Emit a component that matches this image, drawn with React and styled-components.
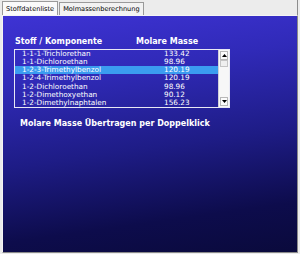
import React from 'react'
import styled, { createGlobalStyle } from 'styled-components'

const GlobalStyle = createGlobalStyle`
  html, body {
    margin: 0;
    padding: 0;
    background: #ececec;
  }
  body {
    font-family: "DejaVu Sans", Verdana, sans-serif;
  }
`

const Window = styled.div`
  width: 300px;
  height: 254px;
  box-sizing: border-box;
  padding: 0 2px 1px 2px;
  display: flex;
  flex-direction: column;
  background: #ececec;
  overflow: hidden;
`

const TabBar = styled.div`
  height: 15px;
  display: flex;
  align-items: flex-end;
  gap: 1px;
  background: #ececec;
  border-right: 1px solid #8c8c8c;
`

const Tab = styled.div`
  height: ${(p) => (p.$active ? '14px' : '13px')};
  box-sizing: border-box;
  padding: 0 3px;
  display: flex;
  align-items: center;
  font-size: 6.6px;
  color: #000;
  background: ${(p) => (p.$active ? '#fafafa' : '#f2f2f2')};
  border: 1px solid #9a9a9a;
  border-bottom: none;
  white-space: nowrap;
`

const Panel = styled.div`
  flex: 1;
  border-left: 1px solid #f4f4f4;
  border-top: 1px solid #f4f4f4;
  border-right: 1px solid #8a8a8a;
  border-bottom: 1px solid #8a8a8a;
  background: linear-gradient(172deg, #3e33d4 0%, #302ab8 25%, #1e1c86 55%, #0d0c4c 82%, #0a0a3c 100%);
  padding: 20px 0 0 11px;
  color: #fff;
`

const Headers = styled.div`
  display: flex;
  font-weight: bold;
  font-size: 8px;
  height: 10px;
  align-items: flex-end;
  padding-left: 1px;
`

const HeadCell = styled.div`
  width: ${(p) => p.$w}px;
`

const ListBox = styled.div`
  margin-top: 3px;
  width: 216px;
  height: 59px;
  box-sizing: border-box;
  border: 1px solid #e8e8f4;
  display: flex;
`

const Items = styled.div`
  flex: 1;
`

const Row = styled.div`
  display: flex;
  height: 8.15px;
  line-height: 8.15px;
  font-size: 7.3px;
  background: ${(p) => (p.$selected ? '#3b9cf0' : 'transparent')};
  white-space: nowrap;
`

const Name = styled.div`
  width: 142px;
  padding-left: 7px;
`

const Mass = styled.div``

const Scrollbar = styled.div`
  width: 11px;
  background: #f7f7f7;
  border-left: 1px solid #d0d0d8;
  display: flex;
  flex-direction: column;
  padding: 1px 0;
  box-sizing: border-box;
`

const ScrollButton = styled.div`
  height: 9px;
  margin: 0 1px;
  background: #fbfbfb;
  border: 1px solid #b8b8b8;
  box-sizing: border-box;
  display: flex;
  align-items: center;
  justify-content: center;
`

const Thumb = styled.div`
  height: 7px;
  margin: 0 1px;
  background: #efefef;
  border: 1px solid #c4c4c4;
  box-sizing: border-box;
`

const Track = styled.div`
  flex: 1;
`

const Hint = styled.div`
  margin-top: 11px;
  padding-left: 6px;
  font-size: 8px;
  font-weight: bold;
`

const Arrow = ({ down }) => (
  <svg width="5" height="3" viewBox="0 0 5 3">
    <polygon points={down ? '0,0 5,0 2.5,3' : '0,3 5,3 2.5,0'} fill="#000" />
  </svg>
)

const stoffe = [
  ['1-1-1-Trichlorethan', '133.42'],
  ['1-1-Dichloroethan', '98.96'],
  ['1-2-3-Trimethylbenzol', '120.19'],
  ['1-2-4-Trimethylbenzol', '120.19'],
  ['1-2-Dichloroethan', '98.96'],
  ['1-2-Dimethoxyethan', '90.12'],
  ['1-2-Dimethylnaphtalen', '156.23'],
]

const App = () => {
  return (
    <>
      <GlobalStyle />
      <Window>
        <TabBar>
          <Tab $active>Stoffdatenliste</Tab>
          <Tab>Molmassenberechnung</Tab>
        </TabBar>
        <Panel>
          <Headers>
            <HeadCell $w={121}>Stoff / Komponente</HeadCell>
            <HeadCell>Molare Masse</HeadCell>
          </Headers>
          <ListBox>
            <Items>
              {stoffe.map(([name, mass], i) => (
                <Row key={name} $selected={i === 2}>
                  <Name>{name}</Name>
                  <Mass>{mass}</Mass>
                </Row>
              ))}
            </Items>
            <Scrollbar>
              <ScrollButton>
                <Arrow />
              </ScrollButton>
              <Thumb />
              <Track />
              <ScrollButton>
                <Arrow down />
              </ScrollButton>
            </Scrollbar>
          </ListBox>
          <Hint>Molare Masse Übertragen per Doppelklick</Hint>
        </Panel>
      </Window>
    </>
  )
}

export default App
